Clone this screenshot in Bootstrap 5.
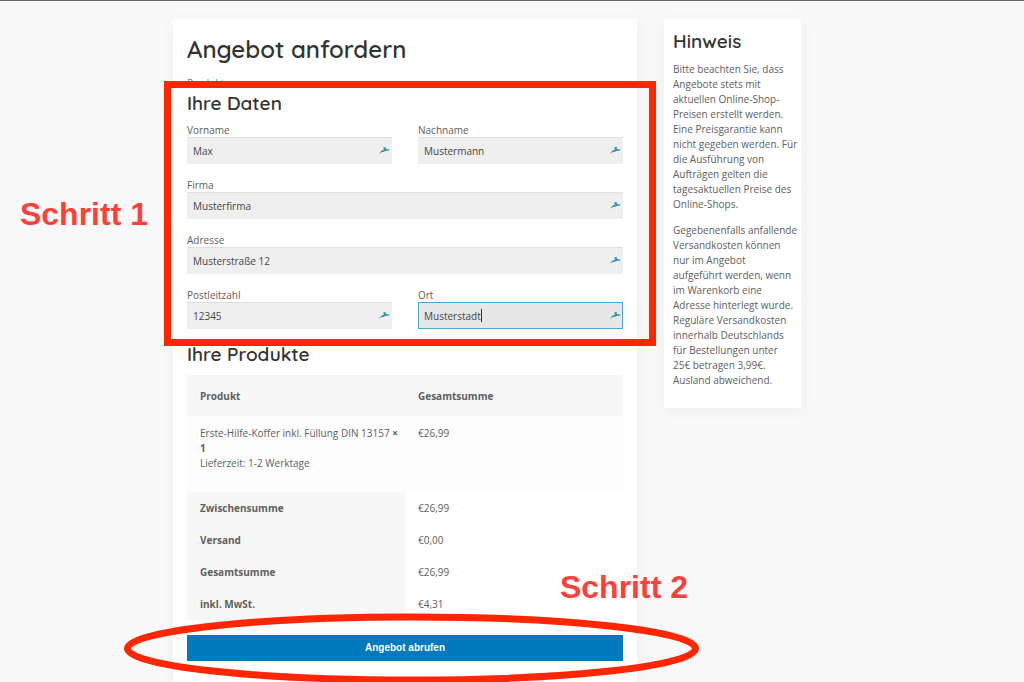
<!DOCTYPE html>
<html lang="de">
<head>
<meta charset="utf-8">
<meta name="viewport" content="width=device-width, initial-scale=1">
<title>Angebot anfordern</title>
<link href="https://cdn.jsdelivr.net/npm/bootstrap@5.3.0/dist/css/bootstrap.min.css" rel="stylesheet">
<style>
  body { font-family: "Open Sans", "Noto Sans", sans-serif; font-size: 10px; line-height: 15px; color: #606060; background: #f9f9f9; }
  h1, h2 { font-family: Quicksand, Lato, sans-serif; font-weight: 600; color: #333; margin: 0; }
  h1 { font-size: 24px; line-height: 32px; }
  h2 { font-size: 19px; line-height: 24px; }
  .page { border-top: 1px solid #68656c; padding-top: 18px; min-height: 100vh; overflow: hidden; display: grid; grid-template-columns: 173fr 464fr 27fr 137fr 223fr; align-items: start; }
  .panel { background: #fff; box-shadow: 0 3px 16px rgba(0,0,0,.05); }
  .quote { grid-column: 2; align-self: stretch; padding: 14px 14px 21px; }
  .hint { grid-column: 4; padding: 10px 2px 9px 9px; }
  .hint h2 { margin-bottom: 9px; }
  .hint p { margin-bottom: 11px; }
  .crumb { display: block; margin-top: 11px; color: #2a96d0; text-decoration: none; line-height: 15px; }
  .legend-line { margin-bottom: 9px; }
  .fields { --bs-gutter-x: 26px; --bs-gutter-y: 15px; }
  .fields label { display: block; line-height: 13px; }
  .field-box { position: relative; }
  .field-box input { display: block; width: 100%; height: 27px; padding: 0 24px 0 5px; border: 1px solid #efefef; border-top-color: #e0e0e0; border-radius: 0; background: #efefef; color: #43454b; outline: 0; }
  .field-box.active input { background: #e7e7e7; border-color: #4ba6d6; }
  .field-box svg { position: absolute; right: 2px; top: 8px; }
  .caret { position: absolute; left: 63px; top: 7px; width: 1px; height: 13px; background: #333; }
  .products-line { margin-top: 13px; }
  .sums { width: 100%; table-layout: fixed; margin-top: 9px; }
  .sums th, .sums td { padding: 9px 2px 8px 13px; vertical-align: top; }
  .sums thead th { padding-top: 14px; padding-bottom: 12px; background: #f7f7f7; }
  .sums .item td { padding-top: 10px; padding-bottom: 21px; background: #fdfdfd; }
  .sums tbody th { background: #f7f7f7; }
  .action { margin-top: 15px; }
  .send { width: 100%; height: 26px; border: 0; border-radius: 0; padding: 0; background: #0079bf; color: #fff; font: bold 10px/26px "Liberation Sans", Arial, sans-serif; }
  .frame { position: absolute; inset: -10px -33px -17px -23px; border: 7px solid #ff2600; pointer-events: none; }
  .step { position: absolute; font: bold 32px/36px "Liberation Sans", Arial, sans-serif; color: #ff4038; white-space: nowrap; }
  .step-one { right: calc(100% + 39px); top: 105px; }
  .step-two { right: -65px; bottom: 56px; }
  .ring { position: absolute; left: -63px; top: -22px; width: calc(100% + 139px); height: 71px; pointer-events: none; overflow: visible; }
</style>
</head>
<body>
<svg class="d-none" aria-hidden="true">
  <symbol id="wing" viewBox="0 0 12 10">
    <path d="M1 8.800C2 7 3.400 5.800 5 5.100L6 4.400 5.100 2.600 6.300 2.300 7.600 1.700 8 4.100 11.500 4.600 11.300 5.400 7.600 5.900 5.200 7.100 3.300 7.300Z" fill="#3a94ad"/>
  </symbol>
</svg>
<div class="page">
  <main class="panel quote">
    <h1>Angebot anfordern</h1>
    <a class="crumb" href="#produkte">Produkt</a>
    <form>
      <section class="position-relative">
        <h2 class="legend-line">Ihre Daten</h2>
        <div class="row fields">
          <div class="col-6"><label for="vorname">Vorname</label>
            <div class="field-box"><input id="vorname" value="Max"><svg width="12" height="10"><use href="#wing"/></svg></div></div>
          <div class="col-6"><label for="nachname">Nachname</label>
            <div class="field-box"><input id="nachname" value="Mustermann"><svg width="12" height="10"><use href="#wing"/></svg></div></div>
          <div class="col-12"><label for="firma">Firma</label>
            <div class="field-box"><input id="firma" value="Musterfirma"><svg width="12" height="10"><use href="#wing"/></svg></div></div>
          <div class="col-12"><label for="adresse">Adresse</label>
            <div class="field-box"><input id="adresse" value="Musterstraße 12"><svg width="12" height="10"><use href="#wing"/></svg></div></div>
          <div class="col-6"><label for="plz">Postleitzahl</label>
            <div class="field-box"><input id="plz" value="12345"><svg width="12" height="10"><use href="#wing"/></svg></div></div>
          <div class="col-6"><label for="ort">Ort</label>
            <div class="field-box active"><input id="ort" value="Musterstadt"><span class="caret"></span><svg width="12" height="10"><use href="#wing"/></svg></div></div>
        </div>
        <div class="frame"></div>
        <div class="step step-one">Schritt 1</div>
      </section>
      <h2 class="products-line" id="produkte">Ihre Produkte</h2>
      <table class="sums">
        <thead><tr><th scope="col">Produkt</th><th scope="col">Gesamtsumme</th></tr></thead>
        <tbody>
          <tr class="item"><td>Erste-Hilfe-Koffer inkl. Füllung DIN 13157&nbsp;<strong>× 1</strong><br>Lieferzeit: 1-2 Werktage</td><td>€26,99</td></tr>
          <tr><th scope="row">Zwischensumme</th><td>€26,99</td></tr>
          <tr><th scope="row">Versand</th><td>€0,00</td></tr>
          <tr><th scope="row">Gesamtsumme</th><td>€26,99</td></tr>
          <tr><th scope="row">inkl. MwSt.</th><td>€4,31</td></tr>
        </tbody>
      </table>
      <div class="position-relative action">
        <button class="btn send" type="button">Angebot abrufen</button>
        <svg class="ring" viewBox="0 0 575 71" preserveAspectRatio="none" aria-hidden="true"><ellipse cx="287.5" cy="35.5" rx="284" ry="31.5" fill="none" stroke="#ff2600" stroke-width="7" vector-effect="non-scaling-stroke"/></svg>
        <div class="step step-two">Schritt 2</div>
      </div>
    </form>
  </main>
  <aside class="panel hint">
    <h2>Hinweis</h2>
    <p>Bitte beachten Sie, dass Angebote stets mit aktuellen Online-Shop-Preisen erstellt werden. Eine Preisgarantie kann nicht gegeben werden. Für die Ausführung von Aufträgen gelten die tagesaktuellen Preise des Online-Shops.</p>
    <p>Gegebenenfalls anfallende Versandkosten können nur im Angebot aufgeführt&nbsp;werden, wenn im Warenkorb eine Adresse hinterlegt wurde. Reguläre Versandkosten innerhalb Deutschlands für Bestellungen unter 25€&nbsp;betragen 3,99€. Ausland abweichend.</p>
  </aside>
</div>
<script src="https://cdn.jsdelivr.net/npm/bootstrap@5.3.0/dist/js/bootstrap.bundle.min.js"></script>
</body>
</html>
